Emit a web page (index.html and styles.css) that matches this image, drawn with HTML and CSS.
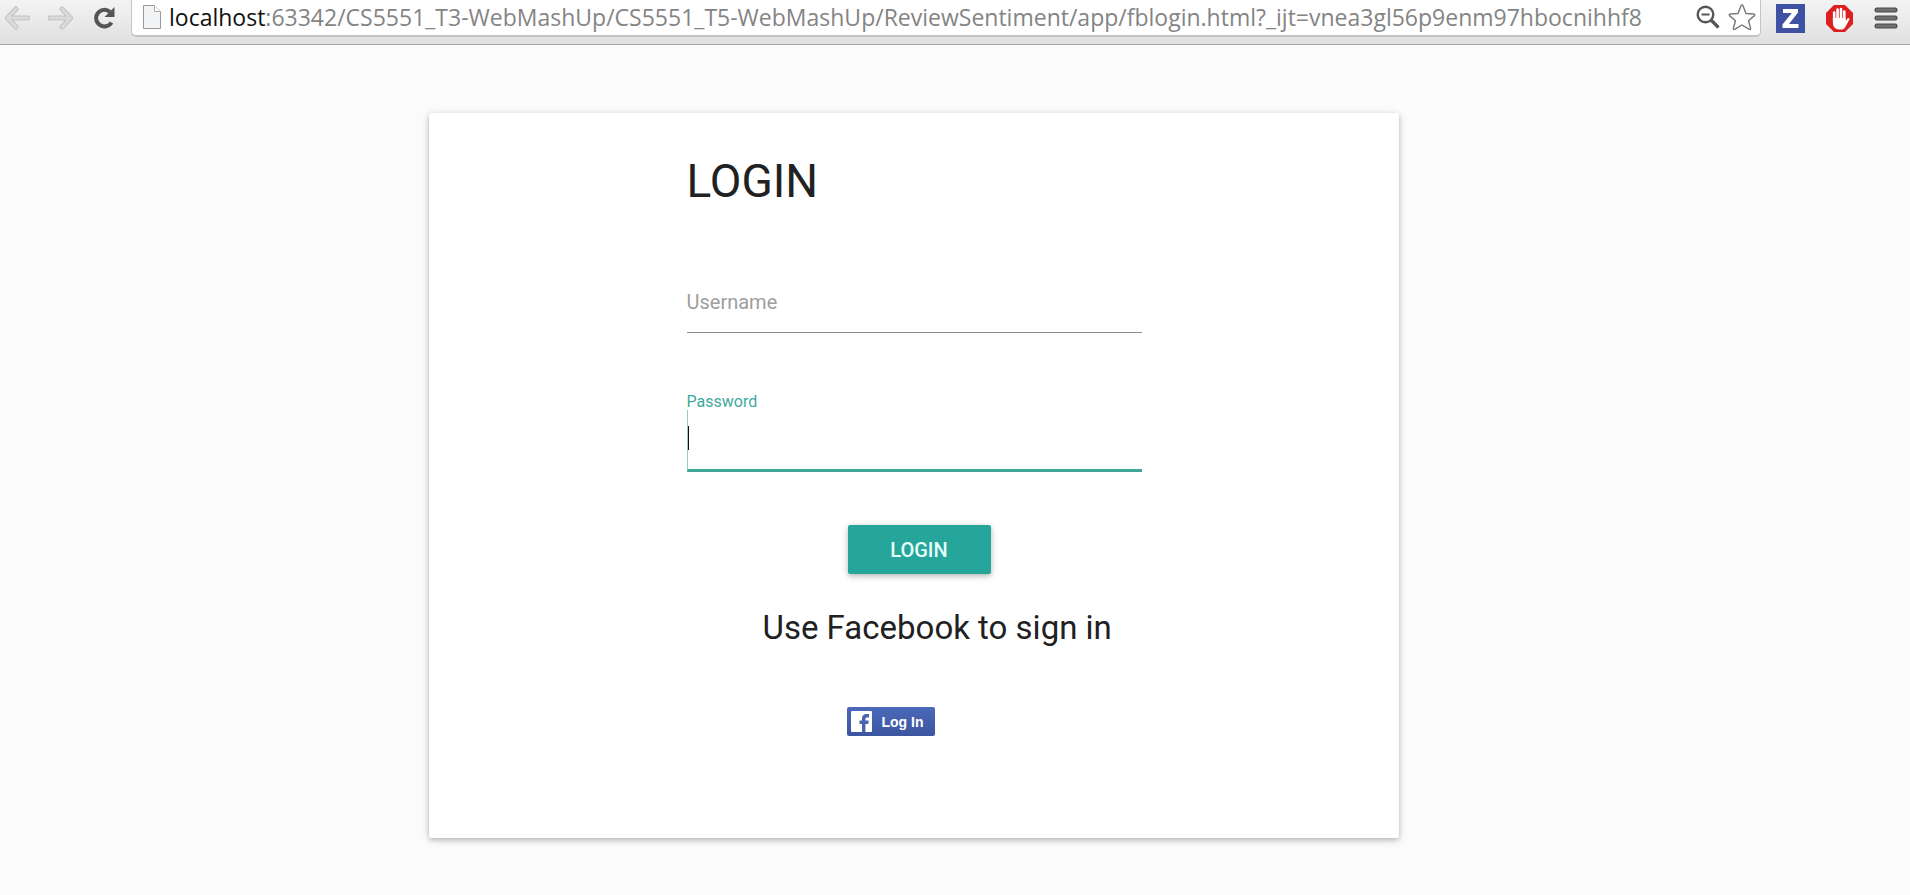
FILE: index.html
```html
<!DOCTYPE html>
<html lang="en">
<head>
<meta charset="utf-8">
<title>Login</title>
<link rel="stylesheet" href="styles.css">
</head>
<body>
<header class="toolbar">
  <nav class="nav" aria-label="History">
    <button class="icon-btn" type="button" aria-label="Back"><svg width="26" height="24" viewBox="0 0 26 24"><path d="M12 3 3.500 12l8.500 9M4 12h20" fill="none" stroke="#c3c3c3" stroke-width="5" stroke-linecap="round" stroke-linejoin="round"/><path d="M12 3 3.500 12l8.500 9M4 12h20" fill="none" stroke="#dadada" stroke-width="3" stroke-linecap="round" stroke-linejoin="round"/></svg></button>
    <button class="icon-btn" type="button" aria-label="Forward"><svg width="26" height="24" viewBox="0 0 26 24"><path d="m14 3 8.500 9-8.500 9M22 12H2" fill="none" stroke="#c3c3c3" stroke-width="5" stroke-linecap="round" stroke-linejoin="round"/><path d="m14 3 8.500 9-8.500 9M22 12H2" fill="none" stroke="#dadada" stroke-width="3" stroke-linecap="round" stroke-linejoin="round"/></svg></button>
    <button class="icon-btn" type="button" aria-label="Reload"><svg width="24" height="24" viewBox="0 0 24 24"><path d="M19.500 16.500A8.300 8.300 0 1 1 18 6" fill="none" stroke="#555" stroke-width="4"/><path d="M22.500 1v10H12.500z" fill="#555"/></svg></button>
  </nav>
  <div class="address">
    <svg class="page-icon" width="18" height="24" viewBox="0 0 18 24"><path d="M.5 .5h11l6 6v17H.5z" fill="#f3f4f6" stroke="#999"/><path d="M11.500 .5v6h6" fill="#fff" stroke="#aaa"/></svg>
    <div class="url" role="textbox" aria-label="Address" contenteditable="true" spellcheck="false"><span class="host">localhost</span>:63342/CS5551_T3-WebMashUp/CS5551_T5-WebMashUp/ReviewSentiment/app/fblogin.html?_ijt=vnea3gl56p9enm97hbocnihhf8</div>
    <button class="icon-btn" type="button" aria-label="Zoom"><svg width="24" height="24" viewBox="0 0 24 24"><circle cx="9.500" cy="9.500" r="7.800" fill="none" stroke="#555" stroke-width="2.400"/><path d="M5.500 9.500h8" stroke="#555" stroke-width="2"/><path d="m15 15 7.500 7.500" stroke="#555" stroke-width="3.200"/></svg></button>
    <button class="icon-btn" type="button" aria-label="Bookmark"><svg width="28" height="28" viewBox="0 0 28 28"><path d="M12.900 2.900q1.100-2 2.200 0l2.900 7.600 7.600.5q2 .4.600 1.900l-5.700 4.900 2.100 7.300q.2 2-1.700 1.100L14 22l-6.900 4.200q-1.900.9-1.700-1.100l2.100-7.300-5.700-4.900q-1.400-1.500.6-1.900l7.600-.5z" fill="#fff" stroke="#777" stroke-width="1.400" stroke-linejoin="round"/></svg></button>
  </div>
  <div class="extensions">
    <button class="icon-btn" type="button" aria-label="Zotero"><svg width="29" height="29" viewBox="0 0 29 29"><path d="M0 0h29v29H0z" fill="#3f51a3"/><path d="M7 5h15v3.500L13 20h9.500v4H6.500v-3.500L15.800 9H7z" fill="#fff"/></svg></button>
    <button class="icon-btn" type="button" aria-label="Ad blocker"><svg width="27" height="27" viewBox="0 0 27 27"><path d="M8 0h11l8 8v11l-8 8H8l-8-8V8z" fill="#dc1f1f"/><path d="M8.200 16V7.500M11.600 14V4.500M15 14V4M18.300 15V6.500" stroke="#fff" stroke-width="2.600" stroke-linecap="round"/><path d="M6.900 13h12.700v3l2-2.500c1-1 2.400 0 1.700 1.200L19 22.500c-1 1.500-2 2-4 2h-2c-4 0-6.100-3-6.100-7z" fill="#fff"/></svg></button>
    <button class="icon-btn" type="button" aria-label="Menu"><svg width="24" height="22" viewBox="0 0 24 22"><path d="M3 3h18M3 11h18M3 19h18" stroke="#484848" stroke-width="5" stroke-linecap="round"/><path d="M3 3h18M3 11h18M3 19h18" stroke="#707070" stroke-width="3" stroke-linecap="round"/></svg></button>
  </div>
</header>
<main class="page">
  <section class="card">
    <form class="form">
      <h1 class="title">LOGIN</h1>
      <div class="field field-empty">
        <label class="field-label" for="username">Username</label>
        <input class="field-input" id="username" type="text">
      </div>
      <div class="field field-active">
        <label class="field-label" for="password">Password</label>
        <input class="field-input" id="password" type="password">
      </div>
      <button class="login" type="submit">LOGIN</button>
      <h2 class="subtitle">Use Facebook to sign in</h2>
      <button class="facebook" type="button">
        <svg width="21" height="21" viewBox="0 0 21 21"><rect width="21" height="21" rx="1" fill="#fff"/><path d="M11 21v-8H8.500V9.500H11V7.500C11 4.500 12.700 3 15.500 3H18v3.500h-2c-1.200 0-1.600.5-1.600 1.500v1.500h3.400L17.300 13h-2.900v8z" fill="#4a63ae"/></svg>
        Log In
      </button>
    </form>
  </section>
</main>
</body>
</html>
```
FILE: styles.css
```css
* { box-sizing: border-box; }
body {
  margin: 0;
  min-height: 100vh;
  background: #fbfbfb;
  color: #212121;
  font-family: Roboto, "Liberation Sans", sans-serif;
}
button { font: inherit; cursor: pointer; }
svg { display: block; }

.toolbar {
  display: flex;
  gap: 15px;
  height: 45px;
  padding: 0 12px 8px 4px;
  align-items: center;
  background: linear-gradient(#f3f3f3, #e0e0e0);
  border-bottom: 1px solid #a5a5a5;
}
.nav { display: flex; gap: 18px; }
.extensions { display: flex; gap: 21px; align-items: center; }
.icon-btn { flex: none; padding: 0; border: 0; background: none; }
.address {
  display: flex;
  flex: 1;
  gap: 8px;
  align-items: center;
  min-width: 0;
  height: 38px;
  padding: 0 4px 0 11px;
  background: #fff;
  border: 1px solid #c4c4c4;
  border-top: 0;
  border-bottom-width: 2px;
  border-radius: 0 0 5px 5px;
}
.page-icon { flex: none; }
.url {
  flex: 1;
  min-width: 0;
  overflow: hidden;
  white-space: nowrap;
  color: #848484;
  font: 23px/32px "Open Sans", "Noto Sans", sans-serif;
}
.host { color: #111; }

.page { padding: 68px 82px 56px 0; }
.card {
  max-width: 970px;
  margin: 0 auto;
  padding: 38px 24px 102px;
  background: #fff;
  border-radius: 2px;
  box-shadow: 0 2px 5px rgba(0, 0, 0, .2), 0 2px 10px rgba(0, 0, 0, .12);
}
.form {
  display: flex;
  flex-direction: column;
  max-width: 455px;
  margin: 0 auto;
}
.title { margin: 0; font-size: 46px; font-weight: 400; line-height: 60px; }
.field { display: grid; }
.field-input {
  width: 100%;
  height: 62px;
  padding: 0;
  border: 0;
  border-bottom: 1px solid #8e8e8e;
  outline: 0;
  background: transparent;
  font: inherit;
  font-size: 20px;
}
.field-empty { margin-top: 60px; }
.field-empty > * { grid-area: 1 / 1; }
.field-empty .field-label {
  align-self: center;
  color: #9e9e9e;
  font-size: 20px;
}
.field-active { margin-top: 61px; }
.field-active .field-label { color: #3fa99b; font-size: 16px; line-height: 16px; }
.field-active .field-input {
  border-left: 1px solid #92cfc7;
  border-bottom: 3px solid #3fa796;
  background: linear-gradient(#111, #111) 0 16px / 1px 24px no-repeat;
}
.login {
  align-self: center;
  width: 143px;
  height: 49px;
  margin: 53px 0 0 10px;
  border: 0;
  border-radius: 2px;
  background: #26a69a;
  color: #e6fffb;
  font-size: 20px;
  font-weight: 500;
  box-shadow: 0 2px 5px rgba(0, 0, 0, .2), 0 2px 10px rgba(0, 0, 0, .12);
}
.subtitle {
  margin: 34px 0 0 76px;
  font-size: 33px;
  font-weight: 400;
  line-height: 40px;
  white-space: nowrap;
}
.facebook {
  display: flex;
  gap: 10px;
  align-items: center;
  width: 88px;
  height: 29px;
  margin: 59px 0 0 160px;
  padding: 0 4px;
  border: 0;
  border-radius: 2px;
  background: linear-gradient(#4c69ba, #3b55a0);
  color: #fff;
  font: bold 14px/20px "Liberation Sans", sans-serif;
  white-space: nowrap;
}
```
